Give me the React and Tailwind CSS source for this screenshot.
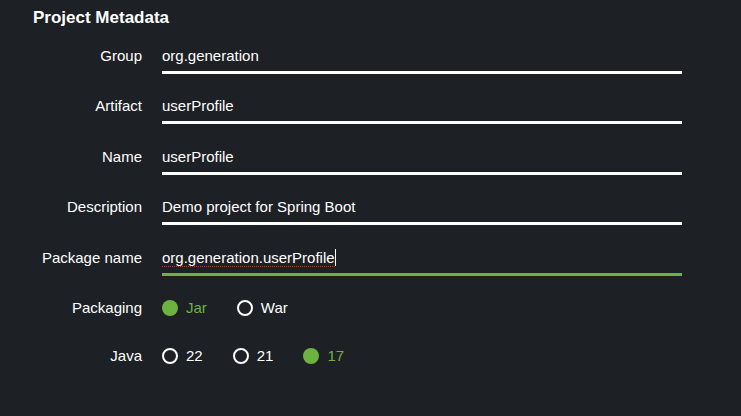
import React from "react";

const fields = [
  { label: "Group", value: "org.generation" },
  { label: "Artifact", value: "userProfile" },
  { label: "Name", value: "userProfile" },
  { label: "Description", value: "Demo project for Spring Boot" },
  { label: "Package name", value: "org.generation.userProfile", focused: true },
];

function TextRow({ label, value, focused }) {
  return (
    <div className="flex mb-[22.5px]">
      <label className="w-[142px] shrink-0 text-right leading-[20px]">{label}</label>
      <div
        className={
          "ml-[20px] w-[520px] leading-[20px] pb-[5px] border-b-[3px] " +
          (focused ? "border-[#6db33f]" : "border-white")
        }
      >
        {focused ? (
          <span className="relative">
            <span className="border-b border-dotted border-[#d0312d]">{value}</span>
            <span className="inline-block w-px h-[17px] bg-white align-[-3px]" />
          </span>
        ) : (
          value
        )}
      </div>
    </div>
  );
}

function Radio({ label, checked }) {
  return (
    <div className="flex items-center gap-[8px]">
      <span
        className={
          "w-4 h-4 rounded-full " +
          (checked ? "bg-[#6db33f]" : "border-2 border-white")
        }
      />
      <span className={checked ? "text-[#6db33f]" : "text-white"}>{label}</span>
    </div>
  );
}

function RadioRow({ label, options, selected, className }) {
  return (
    <div className={"flex leading-[20px] " + className}>
      <label className="w-[142px] shrink-0 text-right">{label}</label>
      <div className="ml-[20px] flex gap-[30px]">
        {options.map((o) => (
          <Radio key={o} label={o} checked={o === selected} />
        ))}
      </div>
    </div>
  );
}

export default function App() {
  return (
    <div
      className="w-[741px] h-[416px] bg-[#1d2024] text-white text-[15px] pt-[6px]"
      style={{ fontFamily: '"Liberation Sans", Arial, sans-serif' }}
    >
      <h2 className="ml-[33px] text-[17px] font-bold leading-[24px] mb-[15.5px]">
        Project Metadata
      </h2>
      {fields.map((f) => (
        <TextRow key={f.label} {...f} />
      ))}
      <RadioRow label="Packaging" options={["Jar", "War"]} selected="Jar" className="mb-[28px]" />
      <RadioRow label="Java" options={["22", "21", "17"]} selected="17" />
    </div>
  );
}
